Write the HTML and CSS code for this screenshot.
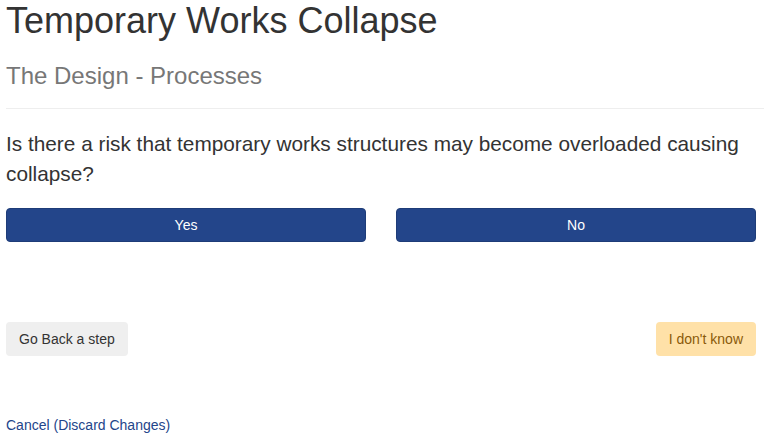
FILE: index.html
```html
<!DOCTYPE html>
<html lang="en">
<head>
  <meta charset="UTF-8" />
  <meta name="viewport" content="width=device-width, initial-scale=1.0"/>
  <title>Temporary Works Collapse</title>
  <link rel="stylesheet" href="styles.css">
</head>
<body>
  <div class="container">
    <h1>Temporary Works Collapse</h1>
    <h3>The Design - Processes</h3>
    <hr />

    <p class="question">Is there a risk that temporary works structures may become overloaded causing collapse?</p>

    <div class="answer-group">
      <button type="button" class="btn btn-primary">Yes</button>
      <button type="button" class="btn btn-primary">No</button>
    </div>

    <div class="step-group">
      <button type="button" class="btn btn-default">Go Back a step</button>
      <button type="button" class="btn btn-warning">I don't know</button>
    </div>

    <a href="#" class="cancel-link">Cancel (Discard Changes)</a>
  </div>
</body>
</html>
```

FILE: styles.css
```css
body {
  font-family: "Liberation Sans", Arial, sans-serif;
  font-size: 14px;
  color: #333;
  margin: 0;
  padding: 0 6px;
  background-color: white;
}
.container {
  width: 750px;
}
h1 {
  font-size: 36px;
  font-weight: 500;
  line-height: 1.1;
  margin: 1px 0 0;
  color: #333;
}
h3 {
  font-size: 24px;
  font-weight: 500;
  line-height: 1.1;
  margin: 22px 0 0;
  color: #777;
}
hr {
  border: 0;
  border-top: 1px solid #eee;
  margin: 19px -8px 0 0;
}
.question {
  font-size: 20.8px;
  line-height: 30px;
  margin: 20px 0 0;
}
.answer-group {
  display: flex;
  gap: 30px;
  margin-top: 19px;
}
.btn {
  font-family: inherit;
  font-size: 14px;
  line-height: 20px;
  padding: 6px 12px;
  border: 1px solid transparent;
  border-radius: 4px;
  cursor: pointer;
}
.answer-group .btn {
  flex: 1;
}
.btn-primary {
  background-color: #23458a;
  border-color: #1e3c78;
  color: white;
}
.btn-default {
  background-color: #efefef;
  color: #333;
}
.btn-warning {
  background-color: #ffe1a8;
  color: #8a5a0a;
}
.step-group {
  display: flex;
  justify-content: space-between;
  margin-top: 80px;
}
.cancel-link {
  display: inline-block;
  margin-top: 61px;
  color: #23458a;
  text-decoration: none;
}
```
